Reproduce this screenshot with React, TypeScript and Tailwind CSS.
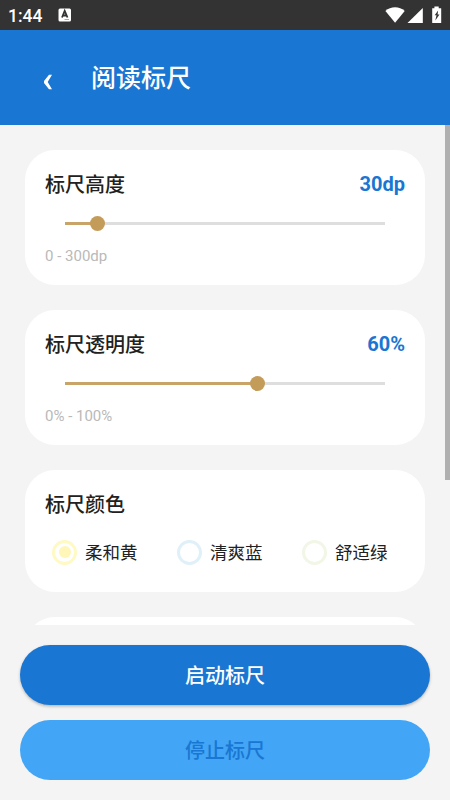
import React from "react";

type SliderCardProps = { title: string; value: string; range: string; percent: number };

function SliderCard({ title, value, range, percent }: SliderCardProps) {
  return (
    <section className="h-[135px] shrink-0 rounded-[30px] bg-white px-5 pt-5">
      <div className="flex h-7 items-center justify-between text-[20px] leading-7">
        <h2 className="pt-[2px] font-medium text-[#212121]">{title}</h2>
        <span className="font-bold text-[#1976d2]">{value}</span>
      </div>
      <div className="mx-5 mt-[18px] flex h-[15px] items-center">
        <div className="h-[3px] bg-[#c9a468]" style={{ width: `${percent}%` }} />
        <div className="z-10 -mx-[7.5px] size-[15px] shrink-0 rounded-full bg-[#c49c5a]" />
        <div className="h-[3px] flex-1 bg-[#dedede]" />
      </div>
      <p className="mt-[15px] text-[15px] leading-5 text-[#b9b9b9]">{range}</p>
    </section>
  );
}

const colors = [
  { name: "柔和黄", ring: "border-[#fff9c4]", dot: "bg-[#fff6b8]", selected: true },
  { name: "清爽蓝", ring: "border-[#dff0f8]", dot: "", selected: false },
  { name: "舒适绿", ring: "border-[#f1f6e6]", dot: "", selected: false },
];

function StatusBar() {
  return (
    <div className="flex h-[30px] shrink-0 items-center bg-[#333333] pl-2 pr-2 text-white">
      <span className="w-[50px] pt-px text-[17.5px] font-medium leading-[30px]">1:44</span>
      <svg width="14" height="14" viewBox="0 0 14 14">
        <rect x="0.5" y="0.5" width="12.5" height="13" rx="1.5" fill="#fff" />
        <path d="M4 9.5 6.7 2.8 9.5 9.5M5 7.5h3.5" fill="none" stroke="#333" strokeWidth="1.8" />
        <path d="M6.5 11.5H11" stroke="#aaa" strokeWidth="1" />
      </svg>
      <svg width="58" height="18" viewBox="0 0 58 18" className="ml-auto" fill="#fff">
        <path d="M1.4 5C6.7 .1 15.4 .1 20.7 5L11.1 16.8Z" />
        <path d="M38.8 2v15H23.5Z" />
        <path d="M48.2 2.2h2.2V0.4h4.3v1.8h2.5V17h-9Z" />
        <path d="M54.1 4.6 50.7 9.2h1.8L51.3 14.5l4.2-6.1h-1.9Z" fill="#333" />
      </svg>
    </div>
  );
}

export default function App() {
  return (
    <div className="flex h-[800px] w-[450px] flex-col overflow-hidden bg-[#f4f4f4] font-[Roboto,'Noto_Sans_CJK_SC',sans-serif]">
      <StatusBar />
      <header className="flex h-[95px] shrink-0 items-center bg-[#1976d2] pl-[43px] text-white">
        <button aria-label="返回" className="mt-[9px] w-[48px]">
          <svg width="10" height="16" viewBox="0 0 10 16" fill="#fff">
            <path d="M6 0.8H9L4.7 8 9 15.2H6L1 8.9V7.1Z" />
          </svg>
        </button>
        <h1 className="pt-[3px] text-[25px] font-medium leading-9">阅读标尺</h1>
      </header>
      <div className="flex h-[500px] shrink-0 overflow-hidden">
        <main className="flex min-w-0 flex-1 flex-col gap-[25px] pl-[25px] pr-5 pt-[25px]">
          <SliderCard title="标尺高度" value="30dp" range="0 - 300dp" percent={10} />
          <SliderCard title="标尺透明度" value="60%" range="0% - 100%" percent={60} />
          <section className="h-[122px] shrink-0 rounded-[30px] bg-white px-5 pt-5">
            <h2 className="pt-px text-[20px] font-medium leading-7 text-[#212121]">标尺颜色</h2>
            <div className="mt-[17px] flex pl-[7px]">
              {colors.map((color) => (
                <label key={color.name} className="flex h-8 w-[125px] shrink-0 items-center text-[17.5px] text-[#212121]">
                  <span className={`mr-2 flex size-[25px] items-center justify-center rounded-full border-[3px] ${color.ring}`}>
                    {color.selected && <span className={`size-[12px] rounded-full ${color.dot}`} />}
                  </span>
                  <span className="pt-[2px]">{color.name}</span>
                </label>
              ))}
            </div>
          </section>
          <section className="h-[135px] shrink-0 rounded-[30px] bg-white" />
        </main>
        <div className="h-[355px] w-[5px] shrink-0 bg-[#b0b0b0]" />
      </div>
      <footer className="flex flex-col gap-[15px] px-5 pt-5 text-[20px] font-medium">
        <button className="h-[60px] rounded-full bg-[#1976d2] pt-[2px] text-white shadow-[0_1.5px_3px_rgba(0,0,0,0.25)]">启动标尺</button>
        <button disabled className="h-[60px] rounded-full bg-[#42a5f5] pt-[2px] text-[#1976d2]">停止标尺</button>
      </footer>
    </div>
  );
}
